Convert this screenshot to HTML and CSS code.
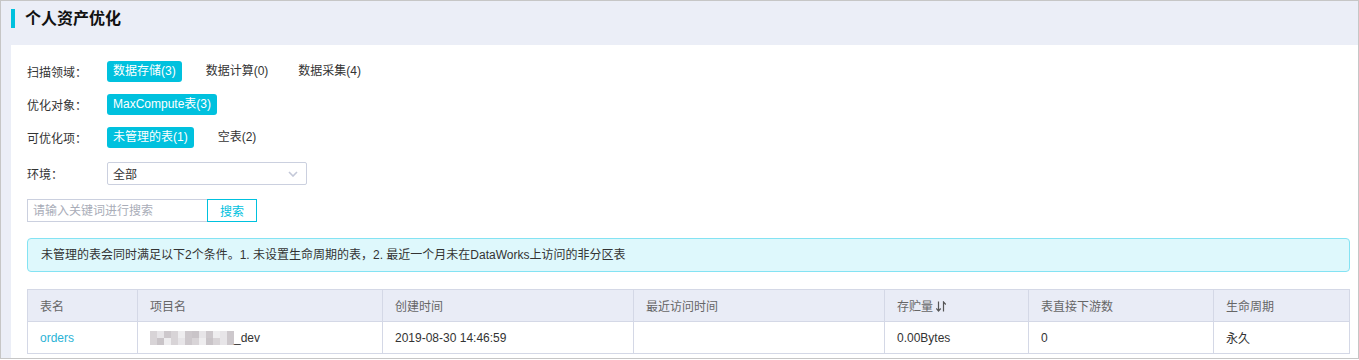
FILE: index.html
```html
<!DOCTYPE html>
<html lang="zh-CN">
<head>
  <meta charset="UTF-8">
  <title>个人资产优化</title>
  <link rel="stylesheet" href="styles.css">
</head>
<body>

<div class="page">
  <div class="page-title"><span class="title-bar"></span>个人资产优化</div>

  <div class="panel">
    <div class="filter-row">
      <div class="filter-label">扫描领域：</div>
      <span class="tag active">数据存储(3)</span>
      <span class="tag">数据计算(0)</span>
      <span class="tag">数据采集(4)</span>
    </div>

    <div class="filter-row">
      <div class="filter-label">优化对象：</div>
      <span class="tag active">MaxCompute表(3)</span>
    </div>

    <div class="filter-row">
      <div class="filter-label">可优化项：</div>
      <span class="tag active">未管理的表(1)</span>
      <span class="tag">空表(2)</span>
    </div>

    <div class="filter-row env-row">
      <div class="filter-label">环境：</div>
      <div class="select">
        <span>全部</span>
        <svg class="chevron" width="10" height="6" viewBox="0 0 10 6"><path d="M1 1 L5 5 L9 1" fill="none" stroke="#c3c8d8" stroke-width="1.6"/></svg>
      </div>
    </div>

    <div class="search-row">
      <input type="text" class="search-input" placeholder="请输入关键词进行搜索">
      <button class="btn-search">搜索</button>
    </div>

    <div class="notice">未管理的表会同时满足以下2个条件。1. 未设置生命周期的表，2. 最近一个月未在DataWorks上访问的非分区表</div>

    <table class="asset-table">
      <colgroup>
        <col style="width:110px">
        <col style="width:245px">
        <col style="width:251px">
        <col style="width:251px">
        <col style="width:144px">
        <col style="width:185px">
        <col style="width:136px">
      </colgroup>
      <thead>
        <tr>
          <th>表名</th>
          <th>项目名</th>
          <th>创建时间</th>
          <th>最近访问时间</th>
          <th>存贮量<svg class="sort-icon" width="10" height="11" viewBox="0 0 10 11"><path d="M2.5 0.5 V10 M0.3 7.5 L2.5 10 L4.7 7.5" fill="none" stroke="#555" stroke-width="1.2"/><path d="M7.5 10.5 V1 L9.8 3.5" fill="none" stroke="#555" stroke-width="1.2"/></svg></th>
          <th>表直接下游数</th>
          <th>生命周期</th>
        </tr>
      </thead>
      <tbody>
        <tr>
          <td><a class="link" href="#">orders</a></td>
          <td><div class="project"><span class="mosaic"><i></i><i></i><i></i><i></i><i></i><i></i><i></i><i></i><i></i><i></i><i></i><i></i><i></i><i></i><i></i><i></i><i></i><i></i><i></i><i></i><i></i><i></i><i></i><i></i></span><span class="project-suffix">_dev</span></div></td>
          <td>2019-08-30 14:46:59</td>
          <td></td>
          <td>0.00Bytes</td>
          <td>0</td>
          <td>永久</td>
        </tr>
      </tbody>
    </table>
  </div>
</div>

</body>
</html>
```

FILE: styles.css
```css
* {
  margin: 0;
  padding: 0;
  box-sizing: border-box;
}
body {
  font-family: "Liberation Sans", "Noto Sans CJK SC", sans-serif;
  font-size: 12px;
  color: #333;
  background: #fff;
}

.page {
  width: 1359px;
  height: 359px;
  border: 1px solid #c6c6c6;
  background: #ebeef7;
  padding-left: 10px;
  display: flex;
  flex-direction: column;
}

.page-title {
  height: 44px;
  padding-top: 8px;
  display: flex;
  align-items: flex-start;
  font-size: 16px;
  font-weight: bold;
  color: #111;
  line-height: 19px;
}

.title-bar {
  width: 4px;
  height: 19px;
  background: #00c1de;
  margin-right: 10px;
}

.panel {
  flex: 1;
  background: #fff;
  padding: 16px 8px 0 16px;
}

.filter-row {
  display: flex;
  align-items: center;
  height: 21px;
  margin-bottom: 12px;
}

.filter-label {
  width: 80px;
  color: #333;
}

.tag {
  display: inline-block;
  height: 21px;
  line-height: 21px;
  padding: 0 6px;
  margin-right: 18px;
  border-radius: 3px;
  color: #333;
}

.tag.active {
  background: #00c1de;
  color: #fff;
}

.env-row {
  height: 23px;
  margin-top: 14px;
  margin-bottom: 14px;
}

.select {
  width: 200px;
  height: 23px;
  border: 1px solid #cbd0df;
  border-radius: 2px;
  padding: 0 8px 0 5px;
  display: flex;
  align-items: center;
  justify-content: space-between;
}

.chevron {
  display: block;
}

.search-row {
  display: flex;
  height: 23px;
  margin-bottom: 16px;
}

.search-input {
  width: 180px;
  height: 23px;
  border: 1px solid #cbd0df;
  border-right: none;
  padding: 0 5px;
  font-family: inherit;
  font-size: 12px;
  outline: none;
}

.search-input::placeholder {
  color: #a9adb8;
}

.btn-search {
  width: 50px;
  height: 23px;
  border: 1px solid #00c1de;
  background: #fff;
  color: #00c1de;
  font-family: inherit;
  font-size: 12px;
}

.notice {
  height: 34px;
  line-height: 32px;
  padding-left: 13px;
  background: #def8fc;
  border: 1px solid #84e3f3;
  border-radius: 4px;
  margin-bottom: 17px;
}

.asset-table {
  width: 1322px;
  table-layout: fixed;
  border-collapse: collapse;
}

.asset-table th,
.asset-table td {
  height: 32px;
  border: 1px solid #d4d8e6;
  padding: 0 12px;
  text-align: left;
  font-weight: normal;
  white-space: nowrap;
}

.asset-table th {
  background: #e9ecf6;
  color: #666;
}

.sort-icon {
  margin-left: 3px;
  vertical-align: -1px;
}

.link {
  color: #2bb3d6;
  text-decoration: none;
}

.project {
  display: flex;
  align-items: flex-end;
}

.project-suffix {
  line-height: 14px;
}

.mosaic {
  display: grid;
  grid-template-columns: repeat(12, 7px);
  grid-template-rows: 7px 7px;
}

.mosaic i:nth-child(3n+1) { background: #d8d4d7; }
.mosaic i:nth-child(3n+2) { background: #e7e5e8; }
.mosaic i:nth-child(3n) { background: #cdc8cc; }
.mosaic i:nth-child(5n) { background: #eeedef; }
.mosaic i:nth-child(7n) { background: #c9c4c8; }
```
